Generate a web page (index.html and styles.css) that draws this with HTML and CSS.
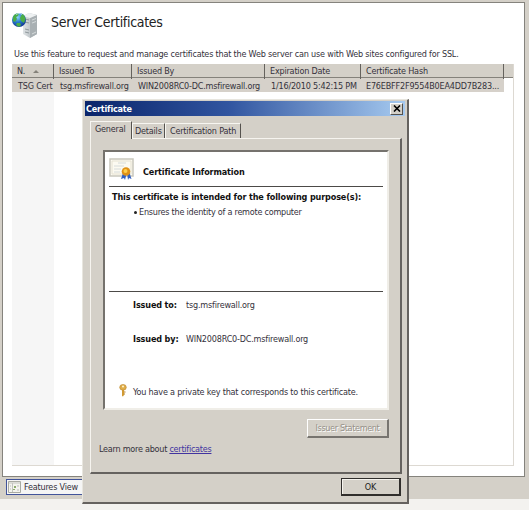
FILE: index.html
```html
<!DOCTYPE html>
<html lang="en">
<head>
<meta charset="utf-8">
<title>Server Certificates</title>
<link rel="stylesheet" href="styles.css">
</head>
<body>
<main class="panel">
  <header class="heading">
    <svg class="server-icon" width="28" height="28" viewBox="0 0 28 28">
      <defs>
        <radialGradient id="globe" cx=".4" cy=".3" r=".75"><stop offset="0" stop-color="#8fd4f5"/><stop offset=".45" stop-color="#2a7fd0"/><stop offset="1" stop-color="#0c2f8c"/></radialGradient>
        <linearGradient id="side"><stop offset="0" stop-color="#dfe3e5"/><stop offset="1" stop-color="#a5adb2"/></linearGradient>
      </defs>
      <path d="M11 4l6-3 8 2v19l-7 4-7-4z" fill="url(#side)"/>
      <path d="M18 6l7-3v19l-7 4z" fill="#a9b0b3"/>
      <path d="M11 4l6-3 8 2-7 3z" fill="#eef1f2"/>
      <path d="M13 7l4 1M13 10l4 1M13 17l4 1M13 20l4 1" stroke="#7f898d" stroke-width=".8"/>
      <path d="M20 8l4-1.500M20 11l4-1.500M20 22l4-2" stroke="#dfe4e6" stroke-width=".8"/>
      <circle cx="7" cy="8" r="7" fill="url(#globe)"/>
      <path d="M1 5c1-3 4-4 6-4L6 4 4 5l1 2-2 3-2-1zM10 2l2 1 1.500 4-1.500 4-3-2-1-3zM5 11l3 0 1 2-2 2-3-2z" fill="#4cae45"/>
      <path d="M4 2.500q3-2 6 0" fill="none" stroke="#d6f3ff" stroke-width="1.200" opacity=".7"/>
    </svg>
    <h1>Server Certificates</h1>
  </header>
  <p class="intro">Use this feature to request and manage certificates that the Web server can use with Web sites configured for SSL.</p>
  <section class="list">
    <div class="row head">
      <span class="sorted">N.<svg width="6" height="3" viewBox="0 0 6 3"><path d="M0 3l3-3 3 3z" fill="#85827a"/></svg></span><span>Issued To</span><span>Issued By</span><span>Expiration Date</span><span>Certificate Hash</span><span></span>
    </div>
    <div class="row item">
      <span>TSG Cert</span><span>tsg.msfirewall.org</span><span>WIN2008RC0-DC.msfirewall.org</span><span>1/16/2010 5:42:15 PM</span><span class="hash">E76EBFF2F9554B0EA4DD7B283...</span>
    </div>
    <div class="sort-column"></div>
  </section>
</main>
<footer class="views">
  <div class="features">
    <svg width="13" height="12" viewBox="0 0 13 12"><path d="M.5.5h12v11H.5z" fill="#f4f4ee" stroke="#a9aaa2"/><path d="M1 2h11M4.500 2v9" stroke="#c2c4be"/><path d="M6 5h2v2H6zM5 8h2v1H5z" fill="#8cab6c"/><path d="M9 5h2M9 9h2M2 5h1M2 8h1" stroke="#bbb"/></svg>
    <span>Features View</span>
  </div>
</footer>
<div class="status"></div>

<div class="dialog">
  <div class="titlebar">
    <span>Certificate</span>
    <button class="close" aria-label="Close"><svg width="8" height="7" viewBox="0 0 8 7"><path d="M1 .5l6 6M7 .5l-6 6" stroke="#000" stroke-width="1.600"/></svg></button>
  </div>
  <nav class="tabs"><span class="tab active">General</span><span class="tab details">Details</span><span class="tab path">Certification Path</span></nav>
  <section class="page">
    <div class="certificate">
      <div class="cert-head">
        <svg width="26" height="23" viewBox="0 0 26 23">
          <path d="M1 1h23v17H1z" fill="#fcfaf1" stroke="#c9c7bd" stroke-width="1.500"/>
          <path d="M3 3h19v13H3z" fill="none" stroke="#e6e2d2"/>
          <path d="M9 5h8M5 8h10M5 11h7M5 14h6" stroke="#cdd3d6" stroke-width=".8"/>
          <path d="M14 15l-2 6 3-1 1 2 1.500-6zM18 15l1 7 1-2 2.500 1-2-6z" fill="#315fc1"/>
          <circle cx="17" cy="13.500" r="4.300" fill="#e09116"/><circle cx="16.500" cy="13" r="2" fill="#ffcf4c"/>
        </svg>
        <b>Certificate Information</b>
      </div>
      <b class="purpose">This certificate is intended for the following purpose(s):</b>
      <div class="bullet"><i></i><span>Ensures the identity of a remote computer</span></div>
      <div class="issued to-line"><b>Issued to:</b><span>tsg.msfirewall.org</span></div>
      <div class="issued"><b>Issued by:</b><span>WIN2008RC0-DC.msfirewall.org</span></div>
      <div class="key">
        <svg width="8" height="13" viewBox="0 0 8 13"><path d="M3 5h2v6l-1 1.500L3 12z" fill="#d19a32"/><path d="M5 8h1.500M5 10h1" stroke="#b17a20"/><ellipse cx="4" cy="3.300" rx="3.300" ry="2.900" fill="#dfad49" stroke="#bd8831" stroke-width=".6"/><circle cx="4" cy="2.500" r="1" fill="#fff5d0"/></svg>
        <span>You have a private key that corresponds to this certificate.</span>
      </div>
    </div>
    <button class="issuer-statement" disabled>Issuer Statement</button>
    <p class="learn">Learn more about <a href="#">certificates</a></p>
  </section>
  <button class="ok">OK</button>
</div>
</body>
</html>
```
FILE: styles.css
```css
* { box-sizing: border-box; }
body {
  margin: 0;
  width: 529px;
  height: 510px;
  overflow: hidden;
  background: #d4d0c8;
  color: #34313b;
  font: 9px/12px "DejaVu Sans Condensed", "DejaVu Sans", sans-serif;
  font-stretch: condensed;
  letter-spacing: -.2px;
  white-space: nowrap;
}
h1, p { margin: 0; font-weight: normal; }
svg { display: block; flex: none; }
button { font: inherit; letter-spacing: inherit; color: #222; padding: 0; }
b { color: #111; letter-spacing: -.13px; }

.panel {
  width: 523px;
  height: 475px;
  margin: 2px 0 0 2px;
  padding: 0 10px 0 9px;
  border: 1px solid #85837d;
  background: #fff;
}
.heading { display: flex; height: 45px; padding: 9px 0 0; }
.heading h1 { margin-left: 11px; font-size: 14px; line-height: 20px; color: #222; letter-spacing: -.3px; }
.intro { height: 16px; padding-left: 2px; }
.list { height: 402px; border: solid #ddd9d2; border-width: 0 1px 1px 0; }
.row { display: grid; grid-template-columns: 42px 78px 133px 96px 143px 9px; height: 14px; line-height: 14px; }
.head { background: #d4d0c8; border-bottom: 1px solid #85827b; }
.head span { border-right: 1px solid #65625d; padding-left: 5px; line-height: 15px; }
.head span:last-child { border: 0; }
.head .sorted { display: flex; align-items: center; gap: 8px; }
.item { width: 492px; background: #d6d1ca; line-height: 16px; }
.item span { padding-left: 6px; }
.item .hash { padding-left: 5px; }
.sort-column { width: 42px; height: 373px; background: #f6f6f6; }

.views { height: 22px; padding: 2px 0 0 4px; }
.features { display: flex; align-items: center; gap: 3px; width: 78px; height: 16px; padding-left: 1px; margin-left: 2px; border: 1px solid #42549a; background: #f5f5f5; }
.status { height: 11px; background: #f3f2ef; }

.dialog {
  position: absolute;
  left: 82px;
  top: 99px;
  width: 327px;
  height: 405px;
  padding: 1px 2px 2px;
  background: #d4d0c8;
  border: solid #e8e6df;
  border-width: 1px 2px 2px 1px;
  border-right-color: #65625f;
  border-bottom-color: #65625f;
}
.titlebar { display: flex; justify-content: space-between; align-items: center; height: 15px; padding: 0 2px 0 1px; background: linear-gradient(90deg, #0a246a, #3155a0 45%, #a6caf0); color: #fff; font-weight: bold; }
.close { display: grid; place-items: center; width: 13px; height: 12px; border: 1px solid #fff; border-right-color: #55524e; border-bottom-color: #55524e; background: #d4d0c8; }
.tabs { display: flex; align-items: flex-end; height: 22px; padding-left: 5px; }
.tab { height: 15px; padding: 1px 0 0 4px; border-top: 1px solid #f7f6f1; border-left: 1px solid #f7f6f1; border-right: 1px solid #55524e; }
.active { position: relative; z-index: 1; width: 42px; height: 18px; margin-bottom: -1px; background: #d4d0c8; }
.details { width: 33px; padding-left: 2px; }
.path { width: 76px; }
.page { width: 312px; height: 336px; margin-left: 5px; padding: 11px 12px 0; border: 1px solid #f6f4ef; border-right: 2px solid #65625f; border-bottom: 2px solid #65625f; }
.certificate { width: 286px; height: 260px; padding: 8px 4px 0; background: #fff; border: 2px solid #75726d; border-right-color: #f0eee8; border-bottom-color: #f0eee8; }
.cert-head { display: flex; height: 27px; border-bottom: 1px solid #4c4a48; }
.cert-head svg { margin-top: -2px; }
.cert-head b { margin: 6px 0 0 8px; }
.purpose { display: block; height: 18px; padding: 4px 0 0 3px; }
.bullet { display: flex; height: 87px; padding: 1px 0 0 25px; border-bottom: 1px solid #4c4a48; letter-spacing: -.24px; }
.bullet i { width: 3px; height: 3px; margin: 5px 2px 0 0; border-radius: 50%; background: #222; }
.issued { display: flex; height: 34px; padding-left: 24px; }
.issued b { width: 53px; }
.to-line { margin-top: 7px; }
.key { display: flex; gap: 6px; margin-top: 12px; padding-left: 10px; }
.key span { padding-top: 7px; }
.key svg { margin-top: 5px; }
.issuer-statement { display: block; width: 82px; height: 19px; margin: 9px 0 0 204px; border: 1px solid #fff; border-right: 2px solid #77746f; border-bottom: 2px solid #77746f; background: #d4d0c8; color: #969189; text-shadow: 1px 1px #fff; letter-spacing: -.35px; }
.learn { margin: 5px 0 0 -4px; letter-spacing: -.25px; }
.learn a { color: #4234a0; }
.ok { display: block; width: 60px; height: 18px; margin: 4px 0 0 256px; border: 1px solid #302e2c; border-right-width: 2px; border-bottom-width: 2px; background: #d4d0c8; box-shadow: inset 1px 1px #f5f3ee; }
```
